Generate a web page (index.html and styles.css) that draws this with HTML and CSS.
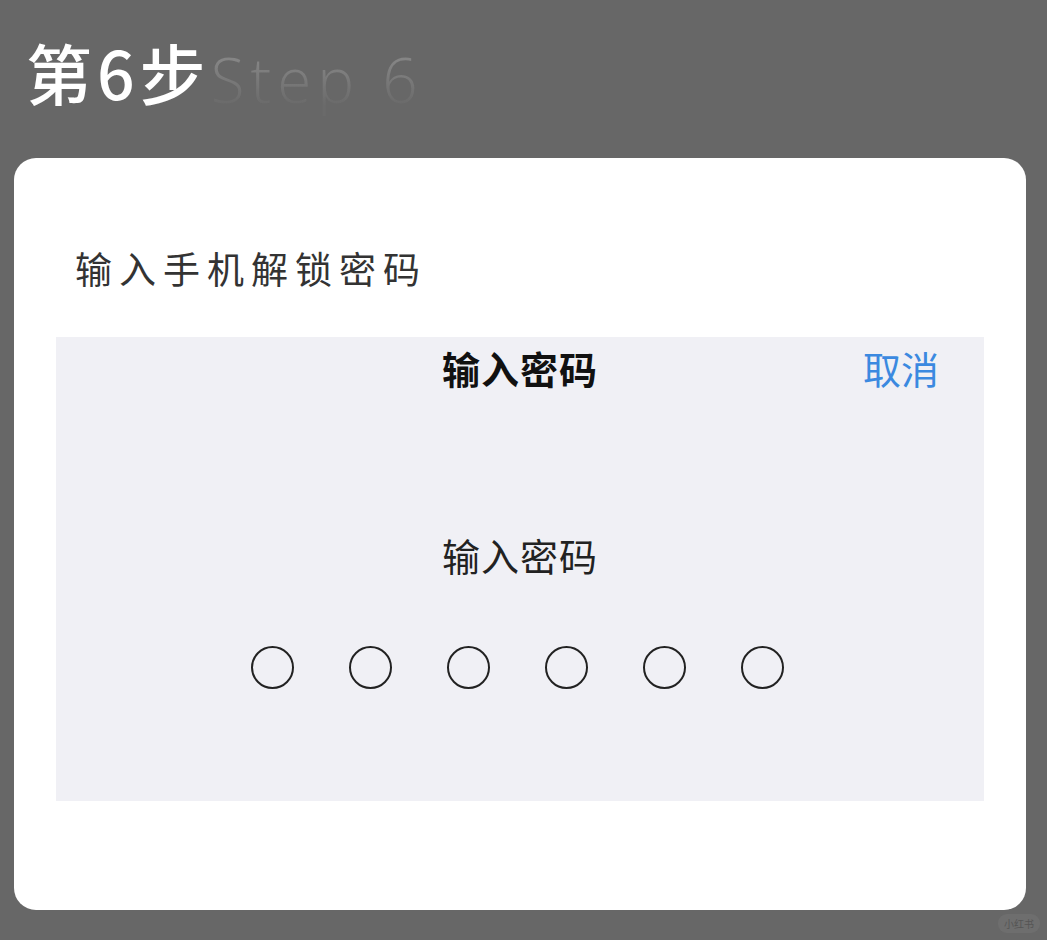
FILE: index.html
```html
<!DOCTYPE html>
<html lang="zh-CN">
<head>
    <meta charset="UTF-8">
    <title>第6步 输入手机解锁密码</title>
    <link rel="stylesheet" href="styles.css">
</head>
<body>
    <div class="header">
        <span class="step-cn">第6步</span>
        <span class="step-en">Step 6</span>
    </div>

    <div class="card">
        <div class="card-title">输入手机解锁密码</div>

        <div class="panel">
            <div class="panel-bar">
                <span class="panel-title">输入密码</span>
                <span class="cancel">取消</span>
            </div>
            <div class="prompt">输入密码</div>
            <div class="dots">
                <span class="dot"></span>
                <span class="dot"></span>
                <span class="dot"></span>
                <span class="dot"></span>
                <span class="dot"></span>
                <span class="dot"></span>
            </div>
        </div>
    </div>

    <div class="footer">
        <span class="mark">小红书</span>
    </div>
</body>
</html>
```

FILE: styles.css
```css
body {
    margin: 0;
    height: 940px;
    background-color: #676767;
    font-family: "Noto Sans CJK SC", "Noto Sans", sans-serif;
    overflow: hidden;
}
.header {
    height: 158px;
    padding-left: 26px;
    display: flex;
    align-items: flex-end;
    box-sizing: border-box;
    padding-bottom: 50px;
}
.step-cn {
    color: #fff;
    font-size: 66px;
    font-weight: 500;
    line-height: 74px;
    letter-spacing: 5px;
}
.step-en {
    font-family: "Open Sans", "Liberation Sans", sans-serif;
    font-size: 62px;
    font-weight: 300;
    line-height: 74px;
    letter-spacing: 6px;
    background: linear-gradient(to bottom, #858585 25%, #6a6a6a 85%);
    -webkit-background-clip: text;
    background-clip: text;
    color: transparent;
    position: relative;
    top: 8px;
}
.card {
    background-color: #fff;
    margin: 0 21px 0 14px;
    height: 752px;
    border-radius: 22px;
    padding: 88px 42px 0 42px;
    box-sizing: border-box;
}
.card-title {
    color: #333;
    font-size: 37px;
    line-height: 44px;
    letter-spacing: 7px;
    padding-left: 19px;
}
.panel {
    background-color: #f0f0f5;
    margin-top: 47px;
    height: 464px;
    display: flex;
    flex-direction: column;
    align-items: center;
}
.panel-bar {
    align-self: stretch;
    height: 60px;
    display: flex;
    align-items: center;
    justify-content: center;
    position: relative;
}
.panel-title {
    font-size: 38px;
    font-weight: 700;
    color: #111;
    letter-spacing: 1px;
}
.cancel {
    position: absolute;
    right: 45px;
    font-size: 38px;
    color: #3b89e0;
}
.prompt {
    margin-top: 136px;
    font-size: 38px;
    line-height: 44px;
    letter-spacing: 1px;
    color: #222;
}
.dots {
    margin-top: 69px;
    display: flex;
    gap: 55px;
    padding-right: 6px;
}
.dot {
    width: 39px;
    height: 39px;
    border: 2.5px solid #222;
    border-radius: 50%;
}
.footer {
    display: flex;
    justify-content: flex-end;
    padding: 4px 7px 0 0;
}
.mark {
    font-size: 10px;
    color: #555;
    background-color: #6e6e6e;
    border-radius: 9px;
    padding: 2px 6px;
}
```
